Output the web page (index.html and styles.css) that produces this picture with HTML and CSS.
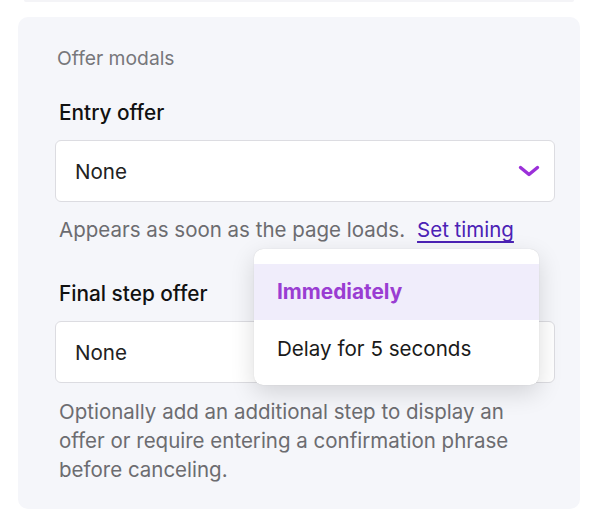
FILE: index.html
```html
<!DOCTYPE html>
<html>
<head>
<meta charset="utf-8">
<link rel="stylesheet" href="styles.css">
</head>
<body>
<div class="top-edge"></div>
<section class="card">
  <div class="section-title">Offer modals</div>

  <div class="field">
    <div class="label">Entry offer</div>
    <div class="select">
      <span class="value">None</span>
      <svg class="chevron" width="22" height="12" viewBox="0 0 22 12"><path d="M2.5 2.5 L11 9.5 L19.5 2.5" fill="none" stroke="#9b30d9" stroke-width="3.4" stroke-linecap="round" stroke-linejoin="round"/></svg>
    </div>
    <div class="help-row">
      <span class="help">Appears as soon as the page loads.</span>
      <a class="link">Set timing</a>
      <div class="menu">
        <div class="item active">Immediately</div>
        <div class="item">Delay for 5 seconds</div>
      </div>
    </div>
  </div>

  <div class="field second">
    <div class="label">Final step offer</div>
    <div class="select">
      <span class="value">None</span>
    </div>
    <p class="desc">Optionally add an additional step to display an offer or require entering a confirmation phrase before canceling.</p>
  </div>
</section>
</body>
</html>
```
FILE: styles.css
```css
* { box-sizing: border-box; }
body {
  margin: 0;
  background: #ffffff;
  font-family: Inter, "Noto Sans", "Liberation Sans", sans-serif;
  color: #111;
}
.top-edge {
  height: 2px;
  margin: 0 22px 0 24px;
  border-radius: 0 0 8px 8px;
  background: #f4f4f7;
}
.card {
  margin: 15px 16px 0 18px;
  background: #f5f6fa;
  border-radius: 10px;
  padding: 30px 25px 25px 37px;
}
.section-title {
  font-size: 19.3px;
  line-height: 22px;
  color: #77777b;
  padding-left: 2px;
}
.field { margin-top: 32px; }
.field.second { margin-top: 40px; }
.label {
  font-size: 20.8px;
  line-height: 24px;
  font-weight: 500;
  color: #111;
  padding-left: 4px;
  margin-bottom: 15px;
}
.select {
  height: 62px;
  background: #fff;
  border: 1px solid #dcdce1;
  border-radius: 6px;
  display: flex;
  align-items: center;
  justify-content: space-between;
  padding: 0 14px 0 19px;
}
.value {
  font-size: 20.6px;
  color: #222;
}
.chevron { display: block; }
.help-row {
  position: relative;
  margin-top: 16px;
  font-size: 20.5px;
  line-height: 24px;
  padding-left: 4px;
  display: flex;
  gap: 12px;
}
.help { color: #6c6c70; white-space: nowrap; }
.link {
  color: #4b22b5;
  text-decoration: underline;
  text-underline-offset: 4px;
  text-decoration-thickness: 1.5px;
  white-space: nowrap;
}
.menu {
  position: absolute;
  left: 199px;
  top: 31px;
  width: 285px;
  background: #fff;
  border-radius: 9px;
  padding: 15px 0 8px;
  box-shadow: 0 0 1px rgba(0,0,0,0.18), 0 8px 24px rgba(0,0,0,0.14);
  z-index: 2;
}
.item {
  height: 57px;
  display: flex;
  align-items: center;
  padding-left: 23px;
  font-size: 20.6px;
  color: #1a1a1a;
}
.item.active {
  background: #f0edfb;
  color: #9a3dd2;
  font-weight: 700;
  font-size: 20.8px;
  height: 56px;
}
.desc {
  margin: 14px 0 0;
  padding-left: 4px;
  font-size: 20.5px;
  line-height: 29px;
  color: #6c6c70;
}
```
